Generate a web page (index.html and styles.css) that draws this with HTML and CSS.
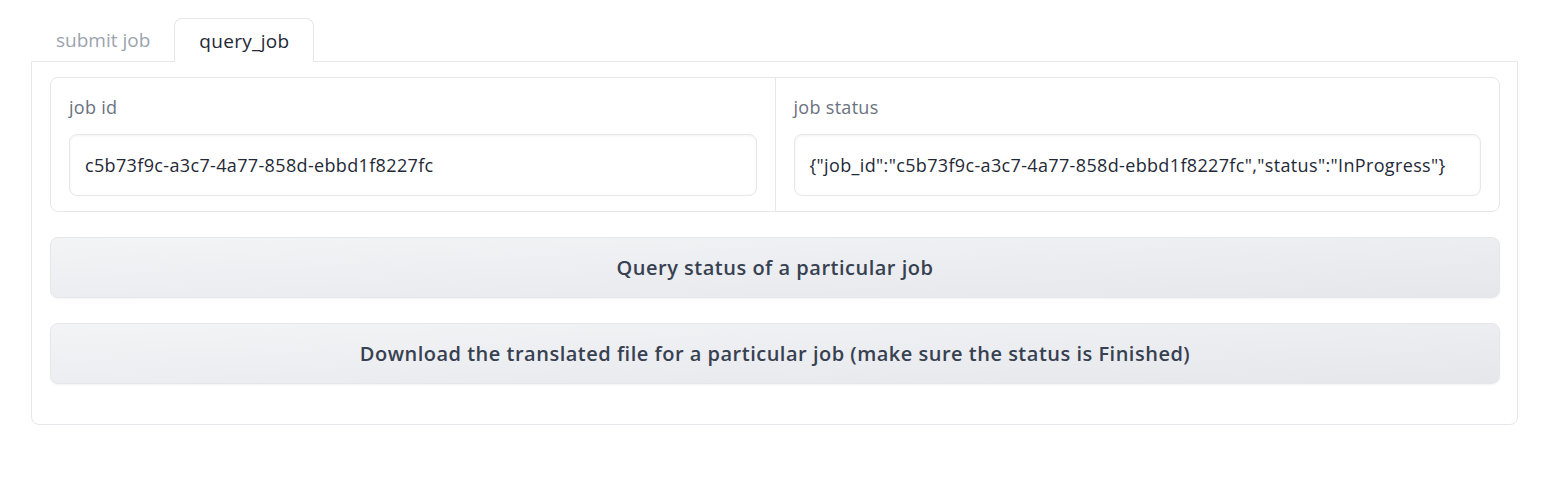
FILE: index.html
```html
<!DOCTYPE html>
<html lang="en">
<head>
<meta charset="utf-8">
<title>query_job</title>
<link rel="stylesheet" href="styles.css">
</head>
<body>
<div class="app">
  <div class="tabs">
    <button class="tab">submit job</button>
    <button class="tab active">query_job</button>
  </div>
  <div class="panel">
    <div class="form">
      <div class="field">
        <span class="label">job id</span>
        <div class="input">c5b73f9c-a3c7-4a77-858d-ebbd1f8227fc</div>
      </div>
      <div class="field divided">
        <span class="label">job status</span>
        <div class="input">{"job_id":"c5b73f9c-a3c7-4a77-858d-ebbd1f8227fc","status":"InProgress"}</div>
      </div>
    </div>
    <button class="btn">Query status of a particular job</button>
    <button class="btn">Download the translated file for a particular job (make sure the status is Finished)</button>
  </div>
</div>
</body>
</html>
```
FILE: styles.css
```css
* { box-sizing: border-box; }
body {
  margin: 0;
  background: #ffffff;
  font-family: "Open Sans", Lato, sans-serif;
  color: #1f2937;
}
.app {
  margin: 18px 0 0 31px;
  width: 1487px;
}
.tabs {
  display: flex;
  height: 43px;
}
.tab {
  font-family: inherit;
  font-size: 19px;
  letter-spacing: 0;
  background: transparent;
  border: 1px solid transparent;
  border-bottom: none;
  border-radius: 8px 8px 0 0;
  padding: 0 23px 0 24px;
  color: #9ca3af;
  height: 43px;
  cursor: pointer;
}
.tab.active {
  background: #ffffff;
  border-color: #e5e7eb;
  color: #1f2937;
  letter-spacing: 0.3px;
  padding: 0 24px;
  height: 44px;
  position: relative;
  z-index: 1;
}
.panel {
  border: 1px solid #e5e7eb;
  border-radius: 0 0 8px 8px;
  padding: 15px 17px 40px 18px;
  display: flex;
  flex-direction: column;
  gap: 25px;
}
.form {
  display: flex;
  border: 1px solid #e5e7eb;
  border-radius: 8px;
}
.field {
  flex: 1;
  padding: 16px 18px 15px 18px;
  display: flex;
  flex-direction: column;
}
.field.divided {
  border-left: 1px solid #e5e7eb;
}
.label {
  font-size: 18px;
  letter-spacing: 0.3px;
  line-height: 26px;
  color: #6b7280;
  margin-bottom: 14px;
}
.input {
  height: 62px;
  border: 1px solid #e5e7eb;
  border-radius: 8px;
  background: #ffffff;
  box-shadow: inset 0 1px 3px rgba(0,0,0,0.05);
  padding: 0 15px;
  display: flex;
  align-items: center;
  font-size: 18px;
  letter-spacing: 0.35px;
  color: #1f2937;
  white-space: nowrap;
  overflow: hidden;
}
.btn {
  height: 61px;
  border: 1px solid #e5e7eb;
  border-radius: 8px;
  background: linear-gradient(to bottom right, #f3f4f6, #e5e7eb);
  box-shadow: 0 1px 2px rgba(0,0,0,0.05);
  font-family: inherit;
  font-size: 20px;
  letter-spacing: 0.5px;
  font-weight: 600;
  color: #374151;
  cursor: pointer;
}
```
